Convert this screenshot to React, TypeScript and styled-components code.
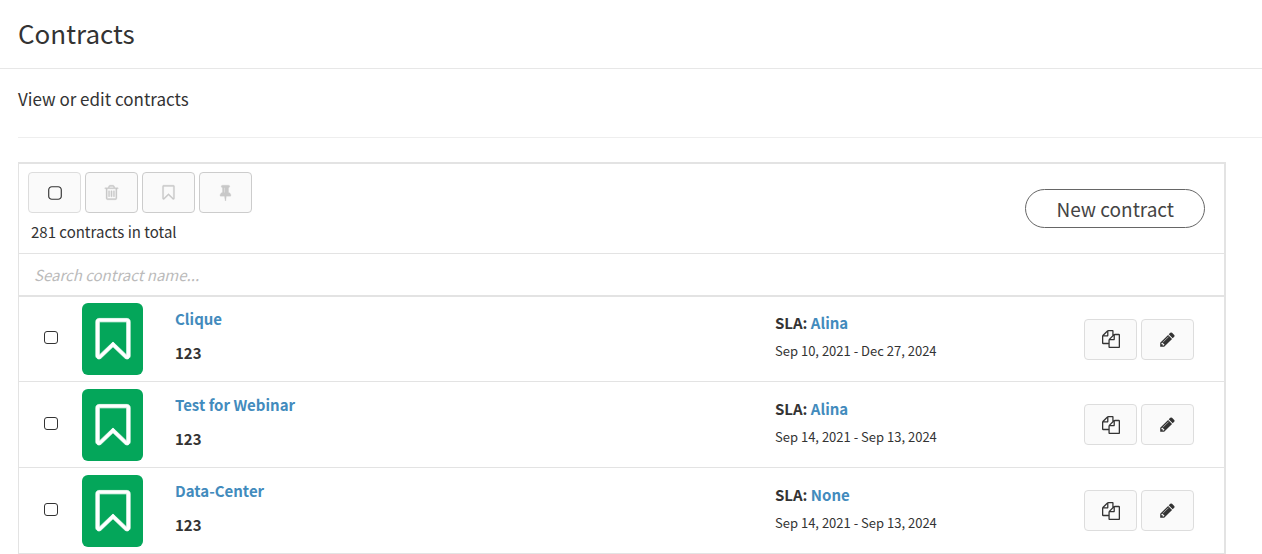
import React from "react";
import styled, { createGlobalStyle } from "styled-components";

const GlobalStyle = createGlobalStyle`
  *, *::before, *::after { box-sizing: border-box; }
  body {
    margin: 0;
    background: #fff;
    color: #333;
    font-family: "Noto Sans CJK SC", "Noto Sans", sans-serif;
    font-size: 15px;
    line-height: 20px;
  }
  button, input { font: inherit; color: inherit; }
`;

const PageHeader = styled.header`
  padding: 13px 18px 15px;
  border-bottom: 1px solid #e7e7e7;
`;

const Title = styled.h1`
  margin: 0;
  font-size: 26px;
  font-weight: 400;
  line-height: 40px;
`;

const Content = styled.main`
  padding-left: 18px;
`;

const Intro = styled.p`
  margin: 0;
  padding: 18px 0 26px;
  border-bottom: 1px solid #eee;
  font-size: 17px;
  line-height: 24px;
`;

const Panel = styled.section`
  margin: 24px 36px 0 0;
  border: 2px solid #e3e3e3;
  border-left-width: 1px;
  border-bottom-width: 1px;
`;

const Toolbar = styled.div`
  display: flex;
  align-items: center;
  justify-content: space-between;
  padding: 8px 19px 10px 9px;
`;

const ButtonGroup = styled.div`
  display: flex;
  gap: 4px;
`;

const IconButton = styled.button`
  display: flex;
  align-items: center;
  justify-content: center;
  width: 53px;
  height: 41px;
  padding: 0;
  border: 1px solid #ddd;
  border-radius: 4px;
  background: #fafafa;
  color: #333;
  cursor: pointer;

  &:disabled {
    border-color: #ccc;
    color: #c8c8c8;
    cursor: default;
  }
`;

const Total = styled.p`
  margin: 9px 0 1px 3px;
`;

const NewButton = styled.button`
  height: 39px;
  margin-top: 2px;
  padding: 0 30px;
  border: 1px solid #666;
  border-radius: 20px;
  background: #fff;
  color: #444;
  font-size: 19px;
  line-height: 34px;
  cursor: pointer;
`;

const SearchInput = styled.input`
  display: block;
  width: 100%;
  height: 42px;
  padding: 0 15px;
  border: 0;
  border-top: 1px solid #e3e3e3;
  background: #fff;
  outline: none;

  &::placeholder {
    color: #bbb;
    font-style: italic;
    opacity: 1;
  }
`;

const List = styled.ul`
  margin: 0;
  padding: 0;
  list-style: none;
`;

const Row = styled.li`
  display: grid;
  grid-template-columns: 38px 93px 600fr 309fr auto;
  align-items: center;
  height: 86px;
  padding: 0 30px 0 25px;
  border-top: 1px solid #e3e3e3;

  &:first-child { border-top-width: 2px; }
`;

const Checkbox = styled.input`
  appearance: none;
  width: 14px;
  height: 13px;
  margin: 0 0 3px;
  border: 1px solid #333;
  border-radius: 3px;
  background: #fff;

  &:checked { background: #333; }
`;

const Tile = styled.div`
  display: flex;
  align-items: center;
  justify-content: center;
  width: 61px;
  height: 72px;
  border-radius: 6px;
  background: #04a65a;
  color: #fff;
`;

const Details = styled.div`
  display: flex;
  flex-direction: column;
  gap: 14px;
  padding-bottom: 6px;
  font-weight: 700;
`;

const Agreement = styled.div`
  display: flex;
  flex-direction: column;
  gap: 8px;
  padding-bottom: 4px;
`;

const Strong = styled.span`
  font-weight: 700;
`;

const Dates = styled.span`
  font-size: 13px;
`;

const Link = styled.a`
  color: #428bbd;
  font-weight: 700;
  text-decoration: none;
`;

const icons = {
  square:
    "M1248 256h-704q-118 0-203 85t-85 203v704q0 118 85 203t203 85h704q118 0 203-85t85-203v-704q0-118-85-203t-203-85zm0-128q172 0 294 122t122 294v704q0 172-122 294t-294 122h-704q-172 0-294-122t-122-294v-704q0-172 122-294t294-122z",
  trash:
    "M704 736v576q0 14-9 23t-23 9h-64q-14 0-23-9t-9-23v-576q0-14 9-23t23-9h64q14 0 23 9t9 23zm256 0v576q0 14-9 23t-23 9h-64q-14 0-23-9t-9-23v-576q0-14 9-23t23-9h64q14 0 23 9t9 23zm256 0v576q0 14-9 23t-23 9h-64q-14 0-23-9t-9-23v-576q0-14 9-23t23-9h64q14 0 23 9t9 23zm128 724v-948h-896v948q0 22 7 40.5t14.5 27 10.5 8.500h832q3 0 10.500-8.500t14.500-27 7-40.500zm-672-1076h448l-48-117q-7-9-17-11h-317q-10 2-17 11zm928 32v64q0 14-9 23t-23 9h-96v948q0 83-47 143.500t-113 60.500h-832q-66 0-113-58.500t-47-141.500v-952h-96q-14 0-23-9t-9-23v-64q0-14 9-23t23-9h309l70-167q15-37 54-63t79-26h320q40 0 79 26t54 63l70 167h309q14 0 23 9t9 23z",
  bookmark:
    "M1408 256h-1024v1242l423-406 89-85 89 85 423 406v-1242zm12-128q23 0 44 9 33 13 52.500 41t19.500 62v1289q0 34-19.500 62t-52.500 41q-19 8-44 8-48 0-83-32l-441-424-441 424q-36 33-83 33-23 0-44-9-33-13-52.500-41t-19.500-62v-1289q0-34 19.500-62t52.500-41q21-9 44-9h1048z",
  pin:
    "M800 864v-448q0-14-9-23t-23-9-23 9-9 23v448q0 14 9 23t23 9 23-9 9-23zm672 352q0 26-19 45t-45 19h-429l-51 483q-2 12-10.500 20.500t-20.500 8.500h-1q-27 0-32-27l-76-485h-404q-26 0-45-19t-19-45q0-123 78.500-221.500t177.500-98.500v-512q-52 0-90-38t-38-90 38-90 90-38h640q52 0 90 38t38 90-38 90-90 38v512q99 0 177.500 98.500t78.500 221.500z",
  copy:
    "M1696 384q40 0 68 28t28 68v1216q0 40-28 68t-68 28h-960q-40 0-68-28t-28-68v-288h-544q-40 0-68-28t-28-68v-672q0-40 20-88t48-76l408-408q28-28 76-48t88-20h416q40 0 68 28t28 68v328q68-40 128-40h416zm-544 213l-299 299h299v-299zm-640-384l-299 299h299v-299zm196 647l316-316v-416h-384v416q0 40-28 68t-68 28h-416v640h512v-256q0-40 20-88t48-76zm956 804v-1152h-384v416q0 40-28 68t-68 28h-416v640h896z",
  pencil:
    "M491 1536l91-91-235-235-91 91v107h128v128h107zm523-928q0-22-22-22-10 0-17 7l-542 542q-7 7-7 17 0 22 22 22 10 0 17-7l542-542q7-7 7-17zm-54-192l416 416-832 832h-416v-416zm683 96q0 53-37 90l-166 166-416-416 166-165q36-38 90-38 53 0 91 38l235 234q37 39 37 91z",
};

interface IconProps {
  name: keyof typeof icons;
  size?: number;
  stroke?: number;
}

function Icon({ name, size = 17, stroke = 0 }: IconProps) {
  return (
    <svg
      width={size}
      height={size}
      viewBox="0 0 1792 1792"
      fill="currentColor"
      stroke={stroke ? "currentColor" : "none"}
      strokeWidth={stroke}
      aria-hidden="true"
    >
      <path d={icons[name]} />
    </svg>
  );
}

const contracts = [
  { name: "Clique", code: "123", sla: "Alina", dates: "Sep 10, 2021 - Dec 27, 2024" },
  { name: "Test for Webinar", code: "123", sla: "Alina", dates: "Sep 14, 2021 - Sep 13, 2024" },
  { name: "Data-Center", code: "123", sla: "None", dates: "Sep 14, 2021 - Sep 13, 2024" },
];

export default function App() {
  return (
    <>
      <GlobalStyle />
      <PageHeader>
        <Title>Contracts</Title>
      </PageHeader>
      <Content>
        <Intro>View or edit contracts</Intro>
        <Panel>
          <Toolbar>
            <div>
              <ButtonGroup>
                <IconButton type="button" aria-label="Select all"><Icon name="square" size={16} /></IconButton>
                <IconButton type="button" aria-label="Delete" disabled><Icon name="trash" stroke={30} /></IconButton>
                <IconButton type="button" aria-label="Bookmark" disabled><Icon name="bookmark" stroke={30} /></IconButton>
                <IconButton type="button" aria-label="Pin" disabled><Icon name="pin" stroke={30} /></IconButton>
              </ButtonGroup>
              <Total>281 contracts in total</Total>
            </div>
            <NewButton type="button">New contract</NewButton>
          </Toolbar>
          <SearchInput type="text" aria-label="Search contract name" placeholder="Search contract name..." />
          <List>
            {contracts.map((c) => (
              <Row key={c.name}>
                <Checkbox type="checkbox" aria-label={`Select ${c.name}`} />
                <Tile><Icon name="bookmark" size={48} stroke={30} /></Tile>
                <Details>
                  <Link href="#">{c.name}</Link>
                  <span>{c.code}</span>
                </Details>
                <Agreement>
                  <span><Strong>SLA:</Strong> <Link href="#">{c.sla}</Link></span>
                  <Dates>{c.dates}</Dates>
                </Agreement>
                <ButtonGroup>
                  <IconButton type="button" aria-label={`Copy ${c.name}`}><Icon name="copy" size={18} /></IconButton>
                  <IconButton type="button" aria-label={`Edit ${c.name}`}><Icon name="pencil" /></IconButton>
                </ButtonGroup>
              </Row>
            ))}
          </List>
        </Panel>
      </Content>
    </>
  );
}
